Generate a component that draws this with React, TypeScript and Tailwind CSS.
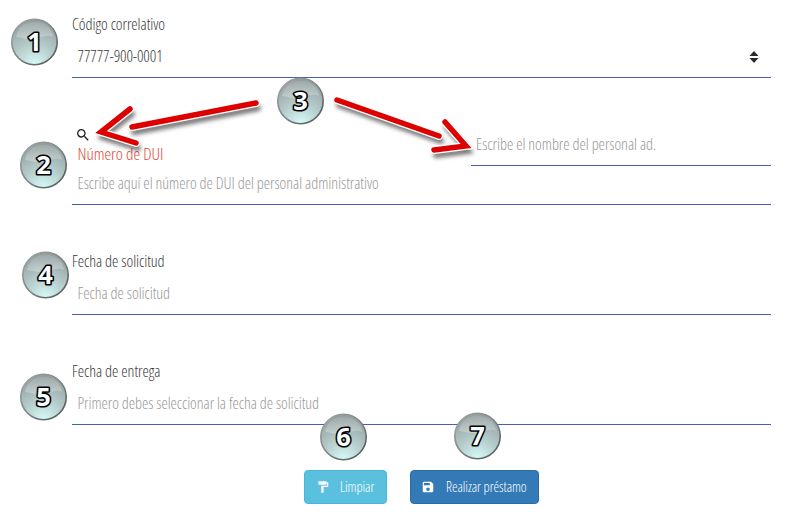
import type { ReactNode } from "react";
import { MdFormatPaint, MdSave, MdSearch } from "react-icons/md";

function Badge({ n, place }: { n: number; place: string }) {
  const id = "b" + n;
  return (
    <svg className={"absolute size-12 " + place} viewBox="0 0 48 48">
      <defs>
        <radialGradient id={id} cx="0.5" cy="1" r="1">
          <stop offset="0" stopColor="#d6fbf8" />
          <stop offset="0.5" stopColor="#b2c8c7" />
          <stop offset="1" stopColor="#929c9c" />
        </radialGradient>
        <linearGradient id={id + "r"} x1="0" y1="0" x2="1" y2="1">
          <stop offset="0" stopColor="#a3a8a8" />
          <stop offset="0.5" stopColor="#7c8383" />
          <stop offset="1" stopColor="#4d5353" />
        </linearGradient>
        <linearGradient id={id + "g"} x1="0" y1="0" x2="0" y2="1">
          <stop offset="0" stopColor="#fff" stopOpacity="0.08" />
          <stop offset="1" stopColor="#fff" stopOpacity="0.28" />
        </linearGradient>
      </defs>
      <circle cx="24.5" cy="24" r="22.7" fill={`url(#${id})`} stroke={`url(#${id}r)`} strokeWidth="1.6" />
      <path d="M6 19C8 9 15 4 24.500 4s17 5 18.500 15C36 15 29 21 21 21 14 21 9 19 6 19Z" fill={`url(#${id}g)`} />
      <text
        x="24.5"
        y="33"
        textAnchor="middle"
        className="font-['Open_Sans',sans-serif] text-[25.5px] font-bold [font-stretch:100%]"
        fill="#fff"
        stroke="#000"
        strokeWidth="3.2"
        strokeLinejoin="round"
        paintOrder="stroke"
      >
        {n}
      </text>
    </svg>
  );
}

function Arrows() {
  const shapes = (
    <>
      <path d="M256 103 132 127M130 109 101 132 136 143" />
      <path d="M337 100 439 136M445 122 466 146 434 150" />
    </>
  );
  return (
    <svg className="absolute left-0 top-0 h-[516px] w-[785px]" viewBox="0 0 785 516" fill="none" strokeLinecap="round" strokeMiterlimit="10">
      <defs>
        <filter id="shade" x="-10%" y="-40%" width="120%" height="200%">
          <feGaussianBlur stdDeviation="2.2" />
        </filter>
      </defs>
      <g stroke="#000" strokeOpacity="0.55" strokeWidth="6" transform="translate(2 5)" filter="url(#shade)">{shapes}</g>
      <g stroke="#fff" strokeWidth="8">{shapes}</g>
      <g stroke="#dc0000" strokeWidth="5.5">{shapes}</g>
    </svg>
  );
}

function Line({ className, children }: { className: string; children: ReactNode }) {
  return <div className={"whitespace-nowrap leading-5 " + className}>{children}</div>;
}

export default function App() {
  return (
    <main className="relative h-[516px] w-[785px] overflow-hidden bg-white font-['Open_Sans',sans-serif] text-[16px] font-light tracking-[-0.03px] text-[#3a3a3a] [font-stretch:75%]">
      <form className="ml-[72px] flex w-[699px] flex-col">
        <section className="h-[78px] border-b border-[#4a5eb0] pt-[14px]">
          <Line className="">Código correlativo</Line>
          <div className="mt-3 flex items-center justify-between pl-[5.5px] pr-3">
            <Line className="tracking-[-0.12px]">77777-900-0001</Line>
            <svg className="mt-px h-3 w-[10px]" viewBox="0 0 10 12" fill="#2b2b2b">
              <path d="M5 0 9.500 5H.5ZM5 12 .5 7h9Z" />
            </svg>
          </div>
        </section>
        <section className="flex h-[127px] justify-between border-b border-[#4a5eb0] pl-[5.5px]">
          <div className="pt-[49px]">
            <MdSearch className="-ml-[3px] mb-px size-4 text-[#222]" />
            <Line className="text-[17px] text-[#dd4b39]">Número de DUI</Line>
            <Line className="mt-[9px] text-[#999]">Escribe aquí el número de DUI del personal administrativo</Line>
          </div>
          <div className="h-[88px] w-[300px] border-b border-[#4a5eb0] pl-[5px] pt-[56px]">
            <Line className="text-[#999]">Escribe el nombre del personal ad.</Line>
          </div>
        </section>
        <section className="h-[110px] border-b border-[#4a5eb0] pt-[46px]">
          <Line className="">Fecha de solicitud</Line>
          <Line className="mt-3 pl-[5.5px] text-[#999]">Fecha de solicitud</Line>
        </section>
        <section className="h-[110px] border-b border-[#4a5eb0] pt-[46px]">
          <Line className="">Fecha de entrega</Line>
          <Line className="mt-3 pl-[5.5px] tracking-[-0.05px] text-[#999]">Primero debes seleccionar la fecha de solicitud</Line>
        </section>
        <div className="ml-[232px] mt-[45px] flex gap-[23px] text-[14px] text-white">
          <button type="button" className="flex h-[34px] w-[83px] items-center rounded border border-[#46b8da] bg-[#5bc0de] pl-[11px]">
            <MdFormatPaint className="size-[14px]" />
            <Line className="ml-[10px]">Limpiar</Line>
          </button>
          <button type="button" className="flex h-[34px] w-[129px] items-center rounded border border-[#2e6da4] bg-[#337ab7] pl-[10px]">
            <MdSave className="size-[14px]" />
            <Line className="ml-[11px]">Realizar préstamo</Line>
          </button>
        </div>
      </form>
      <Arrows />
      <Badge n={1} place="left-[10px] top-[18px]" />
      <Badge n={2} place="left-[19px] top-[141px]" />
      <Badge n={3} place="left-[276px] top-[77px]" />
      <Badge n={4} place="left-[21px] top-[251px]" />
      <Badge n={5} place="left-[19px] top-[373px]" />
      <Badge n={6} place="left-[319px] top-[413px]" />
      <Badge n={7} place="left-[453px] top-[412px]" />
    </main>
  );
}
